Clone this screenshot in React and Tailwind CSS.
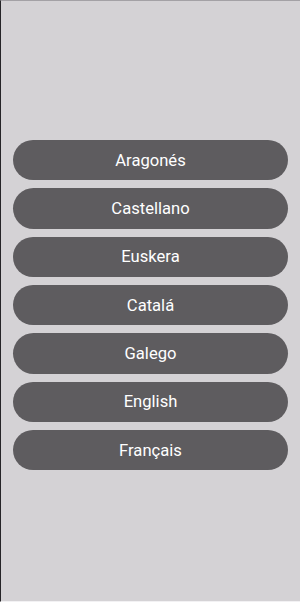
const languages = ["Aragonés", "Castellano", "Euskera", "Catalá", "Galego", "English", "Français"];

export default function App() {
  return (
    <div className="h-[602px] w-[300px] bg-[#d4d2d5] border-l border-l-[#252427] border-t border-t-[#a3a1a5] border-b border-b-[#f2f1f3] flex flex-col pt-[139px] pl-3 pr-3 gap-[8px]" style={{ fontFamily: "Roboto, sans-serif" }}>
      {languages.map((lang) => (
        <button
          key={lang}
          type="button"
          className="h-[40.33px] w-full rounded-full bg-[#5e5c5f] text-white text-[16.6px] flex items-center justify-center pt-[2px]"
        >
          {lang}
        </button>
      ))}
    </div>
  );
}
